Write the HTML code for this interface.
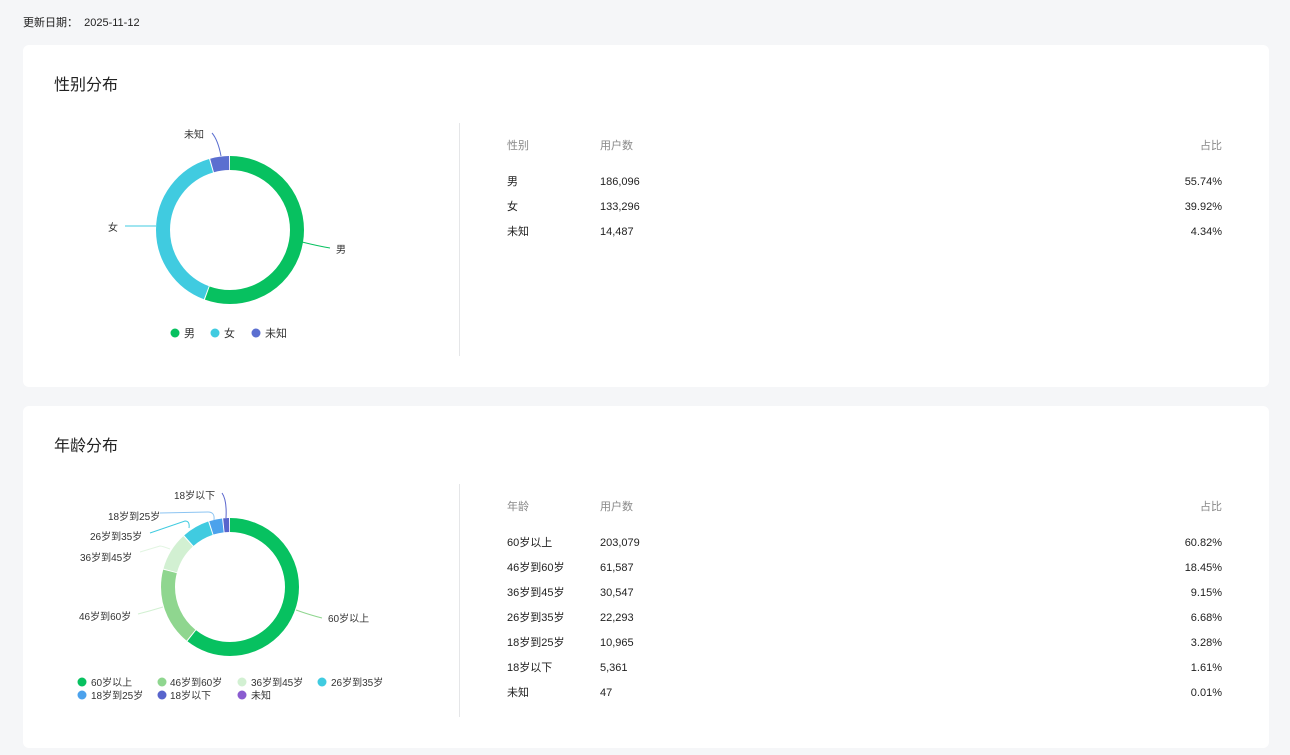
<!DOCTYPE html>
<html><head><meta charset="utf-8"><style>
*{margin:0;padding:0;box-sizing:border-box}
body{width:1290px;height:755px;background:#f5f6f8;font-family:"Liberation Sans","Noto Sans CJK SC",sans-serif;color:#333;position:relative;overflow:hidden}
.date{position:absolute;left:23px;top:16px;font-size:11px;line-height:14px;color:#222}
.card{position:absolute;left:23px;width:1246px;height:342px;background:#fff;border-radius:6px}
.title{position:absolute;left:31px;top:30px;font-size:16px;line-height:22px;color:#222}
.div{position:absolute;left:436px;top:78px;width:1px;height:233px;background:#e5e6e8}
.t{position:absolute;font-size:11px;line-height:14px;color:#222}
.h{color:#888}
.r{text-align:right;width:100px}
svg{position:absolute;left:0;top:0}
svg text{font-family:"Liberation Sans","Noto Sans CJK SC",sans-serif;font-size:10px;fill:#333}
</style></head><body>
<div class="date">更新日期：&nbsp; 2025-11-12</div>

<div class="card" style="top:45px">
<div class="title">性别分布</div>
<div class="div"></div>
<svg width="436" height="342" viewBox="23 45 436 342">
<g transform="rotate(-90 230 230)" fill="none" stroke-width="14">
<circle cx="230" cy="230" r="67" stroke="#07c160" stroke-dasharray="233.6 500" stroke-dashoffset="0"/>
<circle cx="230" cy="230" r="67" stroke="#40cbe0" stroke-dasharray="167 500" stroke-dashoffset="-234.6"/>
<circle cx="230" cy="230" r="67" stroke="#5b6fd0" stroke-dasharray="17.3 500" stroke-dashoffset="-402.65"/>
</g>
<path d="M302 242 Q318 246 330 248" stroke="#07c160" fill="none"/>
<text x="336" y="253">男</text>
<path d="M156 226 Q140 226 125 226" stroke="#40cbe0" fill="none"/>
<text x="108" y="231">女</text>
<path d="M221 156 Q218 140 212 133" stroke="#5b6fd0" fill="none"/>
<text x="184" y="138">未知</text>
<circle cx="175" cy="333" r="4.5" fill="#07c160"/><text x="184" y="337" style="font-size:11px">男</text>
<circle cx="215" cy="333" r="4.5" fill="#40cbe0"/><text x="224" y="337" style="font-size:11px">女</text>
<circle cx="256" cy="333" r="4.5" fill="#5b6fd0"/><text x="265" y="337" style="font-size:11px">未知</text>
</svg>
<div class="t h" style="left:484px;top:94px">性别</div><div class="t h" style="left:577px;top:94px">用户数</div><div class="t h r" style="left:1099px;top:94px">占比</div>
<div class="t" style="left:484px;top:130px">男</div><div class="t" style="left:577px;top:130px">186,096</div><div class="t r" style="left:1099px;top:130px">55.74%</div>
<div class="t" style="left:484px;top:155px">女</div><div class="t" style="left:577px;top:155px">133,296</div><div class="t r" style="left:1099px;top:155px">39.92%</div>
<div class="t" style="left:484px;top:180px">未知</div><div class="t" style="left:577px;top:180px">14,487</div><div class="t r" style="left:1099px;top:180px">4.34%</div>
</div>

<div class="card" style="top:406px">
<div class="title">年龄分布</div>
<div class="div"></div>
<svg width="436" height="342" viewBox="23 406 436 342">
<g transform="rotate(-90 230 587)" fill="none" stroke-width="14">
<circle cx="230" cy="587" r="62" stroke="#07c160" stroke-dasharray="235.9 500" stroke-dashoffset="0"/>
<circle cx="230" cy="587" r="62" stroke="#8fd68f" stroke-dasharray="70.9 500" stroke-dashoffset="-236.93"/>
<circle cx="230" cy="587" r="62" stroke="#d2f0d2" stroke-dasharray="34.6 500" stroke-dashoffset="-308.8"/>
<circle cx="230" cy="587" r="62" stroke="#40cbe0" stroke-dasharray="25 500" stroke-dashoffset="-344.44"/>
<circle cx="230" cy="587" r="62" stroke="#4ca2ec" stroke-dasharray="11.8 500" stroke-dashoffset="-370.46"/>
<circle cx="230" cy="587" r="62" stroke="#5864cc" stroke-dasharray="5.3 500" stroke-dashoffset="-383.24"/>
</g>
<path d="M296 610 Q310 615 322 618" stroke="#8fd68f" fill="none"/><text x="328" y="622">60岁以上</text>
<path d="M163 607 Q150 611 138 614" stroke="#d2f0d2" fill="none"/><text x="79" y="620">46岁到60岁</text>
<path d="M170 549 Q162 546 160 546 L140 552" stroke="#e2f5e2" fill="none"/><text x="80" y="561">36岁到45岁</text>
<path d="M189 528 Q190 521 185 521 L150 533" stroke="#40cbe0" fill="none"/><text x="90" y="540">26岁到35岁</text>
<path d="M214 520 Q215 512 208 512 L160 513" stroke="#8cc4f2" fill="none"/><text x="108" y="520">18岁到25岁</text>
<path d="M226 518 Q227 500 222 493" stroke="#5864cc" fill="none"/><text x="174" y="499">18岁以下</text>
<circle cx="82" cy="682" r="4.5" fill="#07c160"/><text x="91" y="686">60岁以上</text>
<circle cx="162" cy="682" r="4.5" fill="#8fd68f"/><text x="170" y="686">46岁到60岁</text>
<circle cx="242" cy="682" r="4.5" fill="#d2f0d2"/><text x="251" y="686">36岁到45岁</text>
<circle cx="322" cy="682" r="4.5" fill="#40cbe0"/><text x="331" y="686">26岁到35岁</text>
<circle cx="82" cy="695" r="4.5" fill="#4ca2ec"/><text x="91" y="699">18岁到25岁</text>
<circle cx="162" cy="695" r="4.5" fill="#5864cc"/><text x="170" y="699">18岁以下</text>
<circle cx="242" cy="695" r="4.5" fill="#8a5cd0"/><text x="251" y="699">未知</text>
</svg>
<div class="t h" style="left:484px;top:94px">年龄</div><div class="t h" style="left:577px;top:94px">用户数</div><div class="t h r" style="left:1099px;top:94px">占比</div>
<div class="t" style="left:484px;top:130px">60岁以上</div><div class="t" style="left:577px;top:130px">203,079</div><div class="t r" style="left:1099px;top:130px">60.82%</div>
<div class="t" style="left:484px;top:155px">46岁到60岁</div><div class="t" style="left:577px;top:155px">61,587</div><div class="t r" style="left:1099px;top:155px">18.45%</div>
<div class="t" style="left:484px;top:180px">36岁到45岁</div><div class="t" style="left:577px;top:180px">30,547</div><div class="t r" style="left:1099px;top:180px">9.15%</div>
<div class="t" style="left:484px;top:205px">26岁到35岁</div><div class="t" style="left:577px;top:205px">22,293</div><div class="t r" style="left:1099px;top:205px">6.68%</div>
<div class="t" style="left:484px;top:230px">18岁到25岁</div><div class="t" style="left:577px;top:230px">10,965</div><div class="t r" style="left:1099px;top:230px">3.28%</div>
<div class="t" style="left:484px;top:255px">18岁以下</div><div class="t" style="left:577px;top:255px">5,361</div><div class="t r" style="left:1099px;top:255px">1.61%</div>
<div class="t" style="left:484px;top:280px">未知</div><div class="t" style="left:577px;top:280px">47</div><div class="t r" style="left:1099px;top:280px">0.01%</div>
</div>
</body></html>
